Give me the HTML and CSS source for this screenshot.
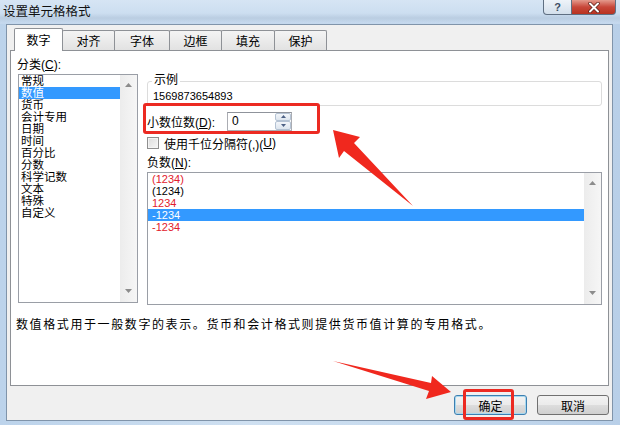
FILE: index.html
```html
<!DOCTYPE html>
<html lang="zh-CN">
<head>
    <meta charset="UTF-8">
    <title>设置单元格格式</title>
    <link rel="stylesheet" href="styles.css">
</head>
<body>
    <div class="window">
        <div class="titlebar">
            <span class="title">设置单元格格式</span>
            <div class="caption-btns">
                <span class="cap-btn help">?</span>
                <span class="cap-btn close">
                    <svg width="14" height="11" viewBox="0 0 14 11"><path d="M3 1.5 L11 9.5 M11 1.5 L3 9.5" stroke="#5a1d16" stroke-width="3.4" stroke-linecap="round"/><path d="M3 1.5 L11 9.5 M11 1.5 L3 9.5" stroke="#ffffff" stroke-width="2" stroke-linecap="round"/></svg>
                </span>
            </div>
        </div>

        <div class="dialog">
            <div class="tabs">
                <span class="tab tab-num active">数字</span>
                <span class="tab tab-align">对齐</span>
                <span class="tab tab-font">字体</span>
                <span class="tab tab-border">边框</span>
                <span class="tab tab-fill">填充</span>
                <span class="tab tab-protect">保护</span>
            </div>

            <div class="panel">
                <div class="panel-grid">
                    <div class="cat-col">
                        <div class="label">分类(<u>C</u>):</div>
                        <div class="listbox cat-list">
                            <ul class="items">
                                <li>常规</li>
                                <li class="selected">数值</li>
                                <li>货币</li>
                                <li>会计专用</li>
                                <li>日期</li>
                                <li>时间</li>
                                <li>百分比</li>
                                <li>分数</li>
                                <li>科学记数</li>
                                <li>文本</li>
                                <li>特殊</li>
                                <li>自定义</li>
                            </ul>
                            <div class="scrollbar">
                                <svg width="7" height="4" viewBox="0 0 7 4"><path d="M0 4 L3.5 0 L7 4 Z" fill="#8c8c8c"/></svg>
                                <svg width="7" height="4" viewBox="0 0 7 4"><path d="M0 0 L3.5 4 L7 0 Z" fill="#8c8c8c"/></svg>
                            </div>
                        </div>
                    </div>

                    <div class="opts-col">
                        <div class="sample-box">
                            <span class="legend">示例</span>
                            <div class="sample-value">1569873654893</div>
                        </div>

                        <div class="decimal-row">
                            <span class="decimal-label">小数位数(<u>D</u>):</span>
                            <div class="spin">
                                <span class="spin-value">0</span>
                                <div class="spin-btns">
                                    <span class="spin-btn"><svg width="5" height="3" viewBox="0 0 5 3"><path d="M0 3 L2.5 0 L5 3 Z" fill="#4d6185"/></svg></span>
                                    <span class="spin-btn"><svg width="5" height="3" viewBox="0 0 5 3"><path d="M0 0 L2.5 3 L5 0 Z" fill="#4d6185"/></svg></span>
                                </div>
                            </div>
                        </div>

                        <label class="check-row"><span class="checkbox"></span>使用千位分隔符(,)(<u>U</u>)</label>

                        <div class="label neg-label">负数(<u>N</u>):</div>
                        <div class="listbox neg-list">
                            <ul class="items">
                                <li class="red">(1234)</li>
                                <li>(1234)</li>
                                <li class="red">1234</li>
                                <li class="selected">-1234</li>
                                <li class="red">-1234</li>
                            </ul>
                            <div class="scrollbar">
                                <svg width="7" height="4" viewBox="0 0 7 4"><path d="M0 4 L3.5 0 L7 4 Z" fill="#8c8c8c"/></svg>
                                <svg width="7" height="4" viewBox="0 0 7 4"><path d="M0 0 L3.5 4 L7 0 Z" fill="#8c8c8c"/></svg>
                            </div>
                        </div>
                    </div>
                </div>

                <p class="desc">数值格式用于一般数字的表示。货币和会计格式则提供货币值计算的专用格式。</p>
            </div>

            <div class="footer">
                <button class="btn btn-ok">确定</button>
                <button class="btn btn-cancel">取消</button>
            </div>
        </div>

        <!-- annotation marks drawn over the dialog -->
        <div class="mark mark-decimal"></div>
        <div class="mark mark-ok"></div>
        <svg class="arrows" width="620" height="425" viewBox="0 0 620 425">
            <polygon points="333,130 360,137 354,143 413,206 344,151 339,158" fill="#f0281e"/>
            <polygon points="451,392 432,376 431,383 333,361 429,391 426,399" fill="#f0281e"/>
        </svg>
    </div>
</body>
</html>
```

FILE: styles.css
```css
body {
    margin: 0;
    padding: 0;
    font-family: 'Liberation Sans', 'Noto Sans CJK SC', sans-serif;
    font-size: 12px;
    color: #000000;
    background-color: #ffffff;
}
ul {
    list-style-type: none;
    margin: 0;
    padding: 0;
}
u {
    text-decoration: underline;
}
.window {
    position: relative;
    width: 620px;
    height: 425px;
    overflow: hidden;
    background: linear-gradient(to right, #bcd3eb, #cfe0f1 40%, #c6daee 70%, #b8cfe8);
}
.titlebar {
    height: 24px;
    display: flex;
    justify-content: space-between;
    align-items: flex-start;
    background:
        linear-gradient(to bottom, rgba(255, 255, 255, 0) 55%, rgba(120, 140, 165, 0.18) 75%, rgba(255, 255, 255, 0) 95%),
        linear-gradient(to bottom, #d6e5f4, #c4d8ed);
}
.title {
    padding-left: 3px;
    line-height: 24px;
    font-size: 12.5px;
    color: #101010;
}
.caption-btns {
    display: flex;
    margin-right: 4px;
}
.cap-btn {
    height: 15px;
    display: flex;
    align-items: center;
    justify-content: center;
    box-sizing: border-box;
    border: 1px solid #5f6f82;
    border-top: none;
}
.help {
    width: 29px;
    border-radius: 0 0 0 4px;
    background: linear-gradient(to bottom, #eef3f9, #d3dfeb);
    color: #3c4d63;
    font-weight: bold;
    font-size: 11px;
}
.close {
    width: 44px;
    border-left: none;
    border-radius: 0 0 4px 0;
    background: linear-gradient(to bottom, #e49a8d, #c8473a 50%, #b8321f);
}
.dialog {
    box-sizing: border-box;
    width: 607px;
    height: 397px;
    margin-left: 6px;
    padding-left: 3px;
    border: 1px solid #8094aa;
    background-color: #f0f0f0;
}
.tabs {
    display: flex;
    align-items: flex-end;
    height: 20px;
    margin-top: 5px;
    margin-left: 4px;
}
.tab {
    box-sizing: border-box;
    height: 20px;
    margin-left: -1px;
    display: flex;
    align-items: center;
    justify-content: center;
    border: 1px solid #8e9196;
    border-bottom: none;
    border-radius: 2px 2px 0 0;
    background: linear-gradient(to bottom, #f4f4f4, #e2e2e2);
}
.tab.active {
    position: relative;
    z-index: 1;
    height: 23px;
    margin-left: 0;
    margin-bottom: -1px;
    padding-bottom: 2px;
    background: #ffffff;
}
.tab-num { width: 49px; }
.tab-align { width: 53px; }
.tab-font { width: 56px; }
.tab-border { width: 53px; }
.tab-fill { width: 54px; }
.tab-protect { width: 53px; }
.panel {
    box-sizing: border-box;
    width: 599px;
    height: 336px;
    border: 1px solid #8e9196;
    background-color: #ffffff;
    padding: 6px 6px 0 7px;
}
.panel-grid {
    display: grid;
    grid-template-columns: 120px 455px;
    column-gap: 9px;
}
.label {
    line-height: 16px;
    margin-left: -1px;
}
.listbox {
    box-sizing: border-box;
    display: flex;
    margin-top: 1px;
    border: 1px solid #9a9ea6;
    background-color: #ffffff;
}
.cat-list {
    height: 229px;
}
.listbox .items {
    flex: 1;
}
.listbox li {
    line-height: 12px;
    height: 12px;
    white-space: nowrap;
}
.cat-list li {
    padding-left: 2px;
    font-size: 11.5px;
}
.listbox li.selected {
    background-color: #3399ff;
    color: #ffffff;
}
.scrollbar {
    width: 17px;
    display: flex;
    flex-direction: column;
    justify-content: space-between;
    align-items: center;
    padding: 8px 0 9px;
    box-sizing: border-box;
    background: linear-gradient(to right, #ececec, #f6f6f6);
}
.sample-box {
    box-sizing: border-box;
    height: 25px;
    margin-top: 24px;
    border: 1px solid #dcdcdc;
    border-radius: 3px;
}
.legend {
    display: block;
    width: fit-content;
    margin: -9px 0 0 4px;
    padding: 0 2px;
    line-height: 14px;
    background-color: #ffffff;
}
.sample-value {
    margin-top: 2px;
    padding-left: 5px;
    line-height: 14px;
    font-size: 11px;
}
.decimal-row {
    display: flex;
    align-items: center;
    height: 18px;
    margin-top: 6px;
}
.decimal-label {
    width: 80px;
}
.spin {
    box-sizing: border-box;
    width: 65px;
    height: 19px;
    display: flex;
    border: 1px solid #abadb3;
    border-top-color: #8f939b;
}
.spin-value {
    flex: 1;
    padding-left: 4px;
    line-height: 17px;
}
.spin-btns {
    width: 16px;
    display: flex;
    flex-direction: column;
}
.spin-btn {
    flex: 1;
    display: flex;
    align-items: center;
    justify-content: center;
    border: 1px solid #b4c2d3;
    border-radius: 2px;
    background: linear-gradient(to bottom, #f3f6fa, #dde5ee);
}
.check-row {
    display: flex;
    align-items: center;
    height: 14px;
    margin-top: 6px;
}
.checkbox {
    box-sizing: border-box;
    width: 12px;
    height: 12px;
    margin-right: 5px;
    border: 1px solid #8f8f8f;
    background: linear-gradient(to bottom right, #dcdcdc, #f6f6f6);
    box-shadow: inset 0 0 0 1px #f4f4f4;
}
.neg-label {
    margin-top: 5px;
    margin-left: 0;
}
.neg-list {
    height: 133px;
}
.neg-list li {
    padding-left: 4px;
    font-size: 11px;
}
.neg-list li.red {
    color: #e2202c;
}
.desc {
    margin: 13px 0 0 -2px;
    line-height: 14px;
    font-size: 12px;
    letter-spacing: 1.6px;
}
.footer {
    display: flex;
    justify-content: flex-end;
    gap: 10px;
    margin-top: 9px;
    padding-right: 3px;
}
.btn {
    box-sizing: border-box;
    height: 20px;
    padding: 0;
    border: 1px solid #707070;
    border-radius: 3px;
    font-family: 'Liberation Sans', 'Noto Sans CJK SC', sans-serif;
    font-size: 12px;
    color: #000000;
    background: linear-gradient(to bottom, #f2f2f2 0%, #ebebeb 50%, #dddddd 51%, #cfcfcf 100%);
}
.btn-ok {
    width: 73px;
    border-color: #3c7fb1;
    box-shadow: inset 0 0 0 1px #a8d8ef;
}
.btn-cancel {
    width: 72px;
}
.mark {
    position: absolute;
    box-sizing: border-box;
    border: 3px solid #ec2a22;
    border-radius: 3px;
}
.mark-decimal {
    left: 143px;
    top: 103px;
    width: 177px;
    height: 31px;
}
.mark-ok {
    left: 463px;
    top: 389px;
    width: 51px;
    height: 31px;
}
.arrows {
    position: absolute;
    left: 0;
    top: 0;
    pointer-events: none;
}
```
